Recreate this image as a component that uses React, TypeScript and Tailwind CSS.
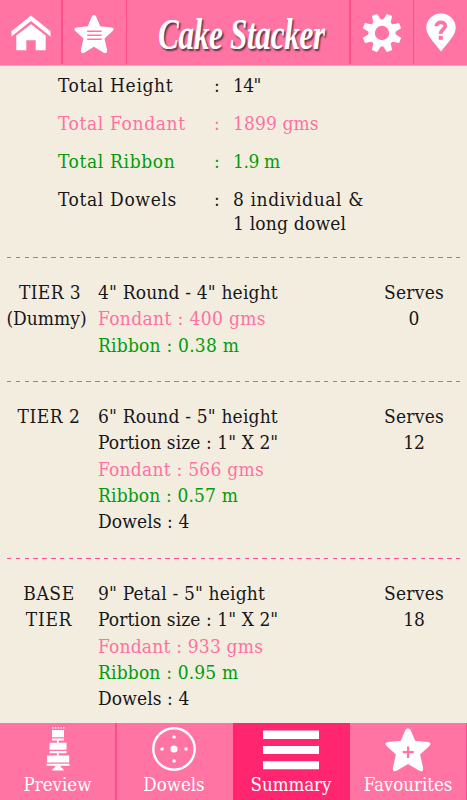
import type { ReactNode } from 'react'
import clsx from 'clsx'

type Tone = 'ink' | 'pink' | 'green'

type Line = { text: string; tone: Tone; track: string }

const tones: Record<Tone, string> = {
  ink: 'text-[#171719]',
  pink: 'text-[#ff70a3]',
  green: 'text-[#009c0a]',
}

const totals: { label: string; tone: Tone; value: { text: string; track: string }[] }[] = [
  { label: 'Total Height', tone: 'ink', value: [{ text: '14"', track: 'tracking-[-0.6px]' }] },
  { label: 'Total Fondant', tone: 'pink', value: [{ text: '1899 gms', track: 'tracking-[0.1px]' }] },
  { label: 'Total Ribbon', tone: 'green', value: [{ text: '1.9 m', track: 'tracking-[-0.4px]' }] },
  {
    label: 'Total Dowels',
    tone: 'ink',
    value: [
      { text: '8 individual &', track: 'tracking-[0.6px]' },
      { text: '1 long dowel', track: 'tracking-[0.2px]' },
    ],
  },
]

const tiers: { name: { text: string; track: string }[]; lines: Line[]; serves: number; height: string }[] = [
  {
    name: [
      { text: 'TIER 3', track: 'ml-[2px] tracking-[0.4px]' },
      { text: '(Dummy)', track: 'mr-[5px]' },
    ],
    lines: [
      { text: '4" Round - 4" height', tone: 'ink', track: 'tracking-[0.17px]' },
      { text: 'Fondant : 400 gms', tone: 'pink', track: 'tracking-[0.37px]' },
      { text: 'Ribbon : 0.38 m', tone: 'green', track: 'tracking-[0.22px]' },
    ],
    serves: 0,
    height: 'h-[124px]',
  },
  {
    name: [{ text: 'TIER 2', track: 'tracking-[0.5px]' }],
    lines: [
      { text: '6" Round - 5" height', tone: 'ink', track: 'tracking-[0.17px]' },
      { text: 'Portion size : 1" X 2"', tone: 'ink', track: 'tracking-[0.07px]' },
      { text: 'Fondant : 566 gms', tone: 'pink', track: 'tracking-[0.25px]' },
      { text: 'Ribbon : 0.57 m', tone: 'green', track: 'tracking-[0.15px]' },
      { text: 'Dowels : 4', tone: 'ink', track: 'tracking-[0.1px]' },
    ],
    serves: 12,
    height: 'h-[177px]',
  },
  {
    name: [
      { text: 'BASE', track: 'tracking-[0.6px]' },
      { text: 'TIER', track: 'tracking-[0.7px]' },
    ],
    lines: [
      { text: '9" Petal - 5" height', tone: 'ink', track: 'tracking-[0.17px]' },
      { text: 'Portion size : 1" X 2"', tone: 'ink', track: 'tracking-[0.07px]' },
      { text: 'Fondant : 933 gms', tone: 'pink', track: 'tracking-[0.2px]' },
      { text: 'Ribbon : 0.95 m', tone: 'green', track: 'tracking-[0.17px]' },
      { text: 'Dowels : 4', tone: 'ink', track: 'tracking-[0.1px]' },
    ],
    serves: 18,
    height: 'h-[165px]',
  },
]

/* ─── Icons ─── */
const star =
  'M20 2.5 Q21.7 2.5 22.6 4.8 L26.2 13.4 L37.3 14.6 Q41.2 15.2 38.6 18 L30.5 25.3 L33.1 36.6 Q33.5 41 29.8 39.4 L20 33.5 L10.2 39.4 Q6.5 41 6.9 36.6 L9.5 25.3 L1.4 18 Q-1.2 15.2 2.7 14.6 L13.8 13.4 L17.4 4.8 Q18.3 2.5 20 2.5Z'

function HomeIcon() {
  return (
    <svg width="40" height="36" viewBox="0 0 40 36" fill="#fff">
      <path d="M.5 16.2 20 .5 39.5 16.2V21.5L20 6 .5 21.5Z" />
      <path d="M5.3 20.6 20 9.2 34.7 20.6V35.3H24.7V25.3H15.3V35.3H5.3Z" />
    </svg>
  )
}

function StarListIcon() {
  return (
    <svg width="40" height="40" viewBox="0 1.5 40 39" preserveAspectRatio="none" fill="#fff">
      <path d={star} />
      <path d="M13.2 18.3H27.6M13.2 22.2H27.6M13.2 26.1H27.6" stroke="#ff74a2" strokeWidth="1.6" />
    </svg>
  )
}

function GearIcon() {
  return (
    <svg width="38" height="38" viewBox="-19 -19 38 38">
      <g fill="#fff" transform="rotate(22.5)">
        {[0, 45, 90, 135, 180, 225, 270, 315].map(deg => (
          <path key={deg} transform={`rotate(${deg})`} d="M-4.4-11-2.8-19.6H2.8L4.4-11Z" />
        ))}
      </g>
      <circle r="10.4" fill="none" stroke="#fff" strokeWidth="6.4" />
    </svg>
  )
}

function HelpPinIcon() {
  return (
    <svg width="30" height="39" viewBox="0 0 30 39">
      <path fill="#fff" d="M15 .5C23.3.5 29.7 6.9 29.7 14.7 29.7 22.5 22.4 28.5 15 38.6 7.6 28.5.3 22.5.3 14.7.3 6.9 6.7.5 15 .5Z" />
      <path d="M10.3 13.2C10.3 8.2 19.3 8 19.3 13 19.3 16.3 14.6 16.2 14.6 21" fill="none" stroke="#ff74a2" strokeWidth="3.7" />
      <path d="M12.7 22.8h4.1v4h-4.1z" fill="#ff74a2" />
    </svg>
  )
}

function CakeIcon() {
  return (
    <svg width="24" height="44" viewBox="0 0 24 44" fill="#fff">
      <path d="M6.2.2h1.5v1.4H6.2zM8.9.2h1.5v1.4H8.9zM11.6.2h1.5v1.4h-1.5zM14.3.2h1.5v1.4h-1.5zM17 .2h1.5v1.4H17z" />
      <path d="M6 3h12v7.2H6zM6 11.5h12v2.1H6zM10.9 13.6h1.8v2.6h-1.8z" />
      <path d="M3.5 15.8h17v7H3.5zM3.5 24.1h17v2.1h-17zM10.9 26.2h1.8v2.5h-1.8z" />
      <path d="M1 28.4h22.2v7H1zM.5 36.8h23v2H.5z" />
      <path d="M9.2 38.8h5.5c-.6 2.5 3 2 3 4.6H6.2c0-2.6 3.6-2.1 3-4.6Z" />
    </svg>
  )
}

function DowelsIcon() {
  return (
    <svg width="44" height="44" viewBox="-22 -22 44 44" fill="#fff">
      <circle r="20.7" fill="none" stroke="#fff" strokeWidth="2.4" />
      <circle r="3.6" />
      <circle cx="-12" r="1.8" />
      <circle cx="12" r="1.8" />
      <circle cy="-12" r="1.8" />
      <circle cy="12" r="1.8" />
    </svg>
  )
}

function SummaryIcon() {
  return (
    <svg width="56" height="40" viewBox="0 0 56 40" fill="#fff">
      <path d="M0 .5h56v8.6H0zM0 16h56v8H0zM0 31.2h56v8H0z" />
    </svg>
  )
}

function StarPlusIcon() {
  return (
    <svg width="46" height="45" viewBox="0 1.5 40 39" preserveAspectRatio="none" fill="#fff">
      <path d={star} />
      <path d="M15.3 23.3H25M20.1 18.3V28.3" stroke="#ff74a2" strokeWidth="2" />
    </svg>
  )
}

/* ─── Shared pieces ─── */
function HeaderButton({ label, className, children }: { label: string; className: string; children: ReactNode }) {
  return (
    <button aria-label={label} className={clsx('flex h-16 shrink-0 items-start border-[#ff4c8b]', className)}>
      {children}
    </button>
  )
}

function DashedRule() {
  return (
    <div className="mx-[7px] h-px shrink-0 bg-[repeating-linear-gradient(90deg,#ff4f94_0px,#ff4f94_4.5px,transparent_4.5px,transparent_8.8px)]" />
  )
}

function Tab({ label, icon, className, pad }: { label: string; icon: ReactNode; className: string; pad: string }) {
  return (
    <button className={clsx('flex h-full shrink-0 flex-col items-center text-[18.5px] text-white', className)}>
      <span className={clsx('flex h-[50px] shrink-0 items-start', pad)}>{icon}</span>
      <span className="whitespace-nowrap leading-6">{label}</span>
    </button>
  )
}

export default function App() {
  return (
    <div className="flex h-[800px] w-[467px] flex-col overflow-hidden bg-[#f3ede0] font-['DejaVu_Serif_Condensed','DejaVu_Serif',serif] text-[19px] text-[#171719] [font-stretch:condensed]">
      <header className="flex h-[66px] shrink-0 border-b border-[#ff9fbd] bg-[#ff74a2]">
        <HeaderButton label="Home" className="w-[63px] border-r-2 pl-[11px] pt-[15px]"><HomeIcon /></HeaderButton>
        <HeaderButton label="Saved cakes" className="w-16 border-r pl-[11px] pt-[14px]"><StarListIcon /></HeaderButton>
        <h1 className="flex h-full min-w-0 flex-1 items-center justify-center pl-[6px] pt-[5px]">
          <span className="shrink-0 scale-x-[0.71] whitespace-nowrap font-['Liberation_Serif',serif] text-[44px] font-bold italic leading-none tracking-[-0.5px] text-white [text-shadow:2px_2px_2px_#5a3446]">
            Cake Stacker
          </span>
        </h1>
        <HeaderButton label="Settings" className="w-16 border-l-2 pl-[12px] pt-[14px]"><GearIcon /></HeaderButton>
        <HeaderButton label="Help" className="w-[54px] border-l pl-[12px] pt-[13px]"><HelpPinIcon /></HeaderButton>
      </header>

      <main className="flex h-[657px] flex-col">
        <section className="flex h-[191px] shrink-0 flex-col gap-[14px] pl-[58px] pt-[7px] leading-6">
          {totals.map(row => (
            <div key={row.label} className={clsx('flex', tones[row.tone])}>
              <span className="w-[156px] whitespace-nowrap tracking-[0.65px]">{row.label}</span>
              <span className="w-[19px]">:</span>
              <span className="flex flex-col whitespace-nowrap">
                {row.value.map(v => <span key={v.text} className={v.track}>{v.text}</span>)}
              </span>
            </div>
          ))}
        </section>

        {tiers.map(tier => (
          <section key={tier.serves} className={clsx('flex shrink-0 flex-col', tier.height)}>
            <DashedRule />
            <div className="flex pt-[21px] leading-[26.3px]">
              <div className="flex w-[98px] flex-col items-center whitespace-nowrap">
                {tier.name.map(n => <span key={n.text} className={n.track}>{n.text}</span>)}
              </div>
              <div className="flex w-[263px] flex-col whitespace-nowrap">
                {tier.lines.map(line => (
                  <span key={line.text} className={clsx(tones[line.tone], line.track)}>{line.text}</span>
                ))}
              </div>
              <div className="flex w-[106px] flex-col items-center">
                <span className="tracking-[0.25px]">Serves</span>
                <span>{tier.serves}</span>
              </div>
            </div>
          </section>
        ))}
      </main>

      <footer className="flex h-[77px] shrink-0 bg-[#ff74a2]">
        <Tab label="Preview" icon={<CakeIcon />} className="w-[117px] border-r-2 border-[#ff4c8b]" pad="pt-[4px]" />
        <Tab label="Dowels" icon={<DowelsIcon />} className="w-[116px] pr-[2px]" pad="pt-[4px]" />
        <Tab label="Summary" icon={<SummaryIcon />} className="w-[117px] bg-[#ff266f] pr-[1px]" pad="pt-[7px]" />
        <Tab label="Favourites" icon={<StarPlusIcon />} className="w-[117px] border-r border-[#ff4c8b]" pad="pt-[4px]" />
      </footer>
    </div>
  )
}
